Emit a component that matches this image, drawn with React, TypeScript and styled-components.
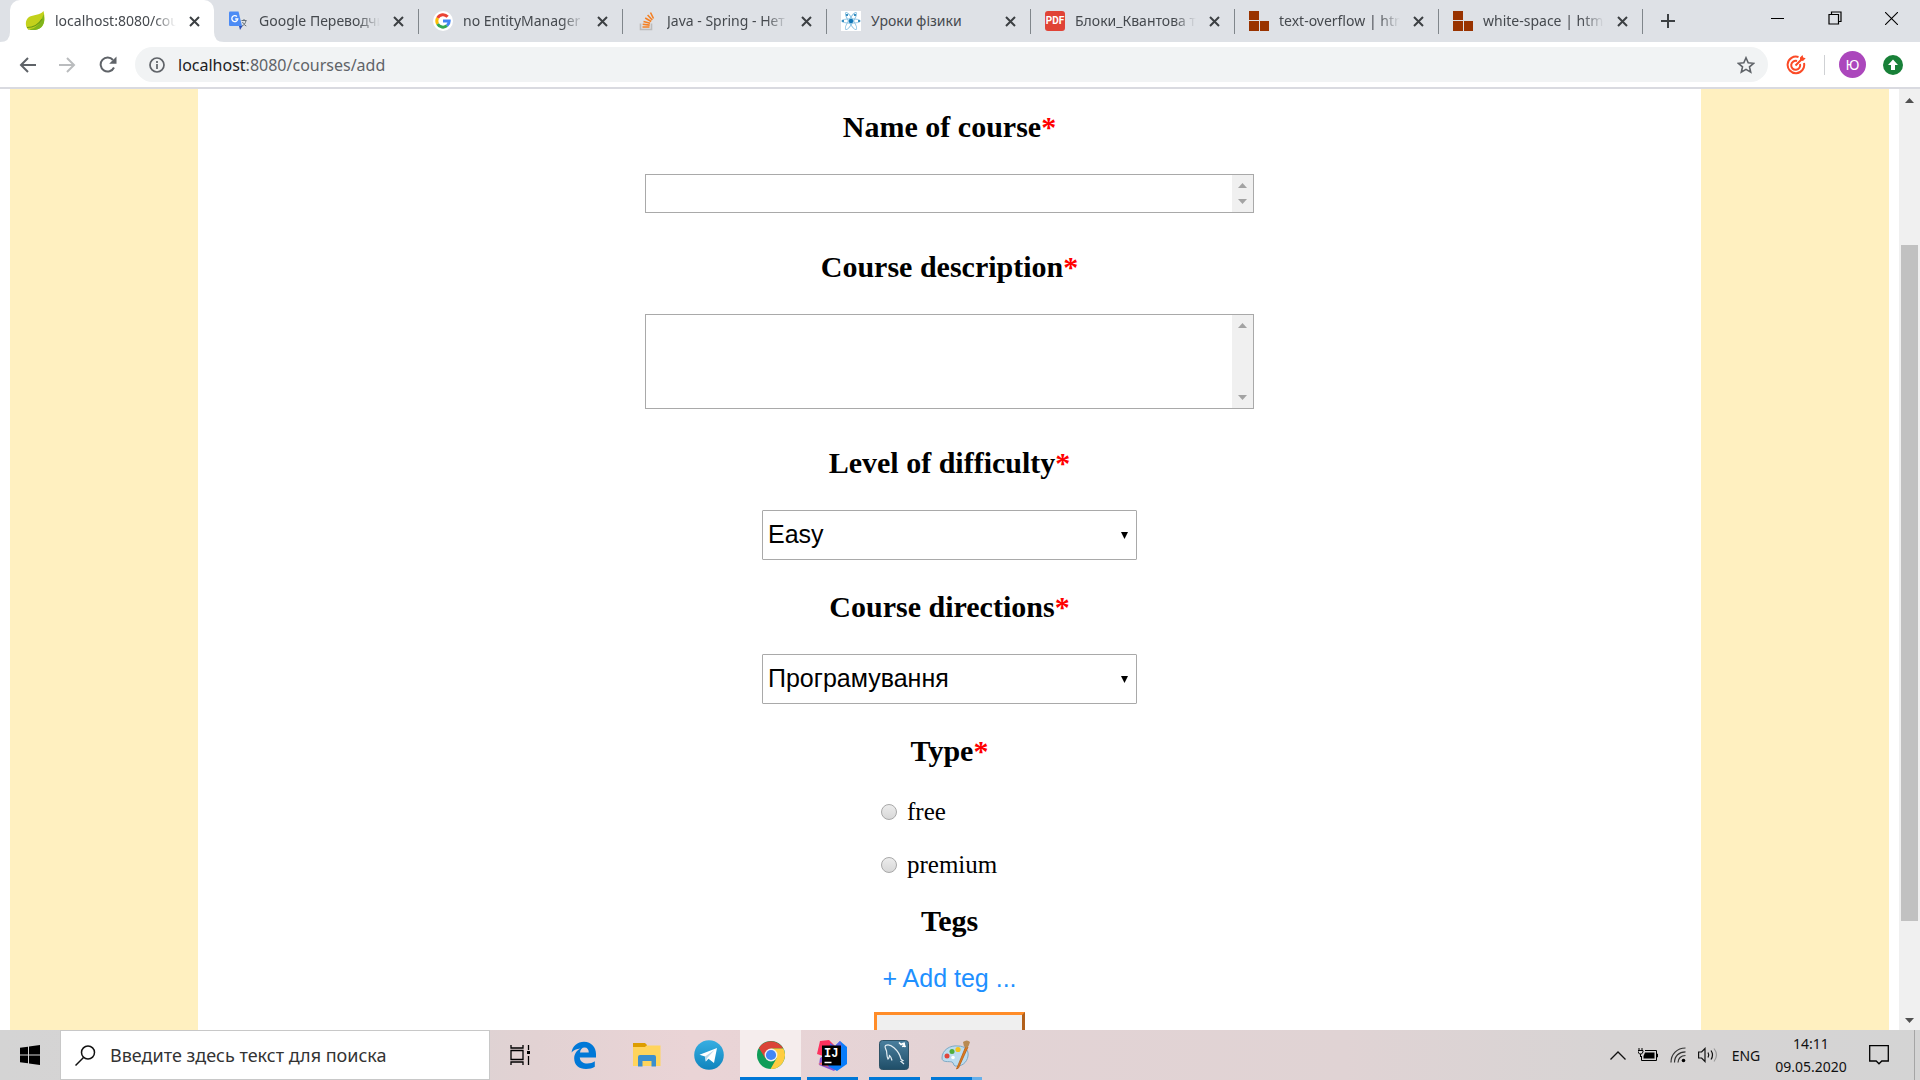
import React from "react";
import styled, { createGlobalStyle } from "styled-components";

const ui = `"Noto Sans", "Open Sans", sans-serif`;
const serif = `"Liberation Serif", "Times New Roman", serif`;
const sans = `"Liberation Sans", Arial, sans-serif`;

const Global = createGlobalStyle`
  * { box-sizing: border-box; }
  html, body { margin: 0; padding: 0; background: #fff; overflow: hidden; }
  button, input, select, textarea { font: inherit; color: inherit; margin: 0; }
  button { border: 0; background: none; padding: 0; }
  svg { display: block; flex: none; }
`;

const Desktop = styled.div`
  display: flex;
  flex-direction: column;
  height: 100vh;
  font-family: ${ui};
`;

/* ---------- browser chrome ---------- */

const TabStrip = styled.header`
  display: flex;
  flex: none;
  height: 42px;
  padding-left: 10px;
  background: #dee1e6;
`;

const Tab = styled.div<{ $active?: boolean; $line?: boolean }>`
  position: relative;
  display: flex;
  align-items: center;
  flex: 0 1 204px;
  min-width: 0;
  padding: 0 12px 0 15px;
  gap: 10px;
  background: ${(p) => (p.$active ? "#fff" : "transparent")};
  border-radius: 10px 10px 0 0;
  &::after {
    content: "";
    position: absolute;
    right: -1px;
    top: 9px;
    width: 1px;
    height: 25px;
    background: ${(p) => (p.$line ? "#80868b" : "transparent")};
  }
`;

const TabFoot = styled.svg<{ $side: "left" | "right" }>`
  position: absolute;
  bottom: 0;
  ${(p) => p.$side}: -10px;
`;

const TabTitle = styled.a<{ $fade?: boolean }>`
  flex: 1;
  min-width: 0;
  white-space: nowrap;
  font-size: 14px;
  line-height: 22px;
  color: #45494e;
  text-decoration: none;
  mask-image: ${(p) =>
    p.$fade ? "linear-gradient(to right, #000 calc(100% - 22px), transparent)" : "none"};
`;

const IconButton = styled.button<{ $w?: number }>`
  display: flex;
  align-items: center;
  justify-content: center;
  flex: none;
  width: ${(p) => p.$w ?? 20}px;
  height: 36px;
`;

const WindowControls = styled.div`
  display: flex;
  margin-left: auto;
`;

const NewTab = styled(IconButton)`
  align-self: center;
  margin-left: 8px;
`;

const Toolbar = styled.nav`
  display: flex;
  align-items: center;
  flex: none;
  height: 47px;
  padding: 0 17px 0 7px;
  background: #fff;
  border-bottom: 2px solid #d9dae0;
`;

const AddressBar = styled.div`
  display: flex;
  align-items: center;
  flex: 1;
  height: 35px;
  margin-left: 7px;
  padding: 0 12px 0 14px;
  gap: 13px;
  border-radius: 18px;
  background: #f1f3f4;
`;

const Url = styled.div`
  flex: 1;
  font-size: 16px;
  line-height: 24px;
  color: #5f6368;
  b { font-weight: 400; color: #202124; }
`;

const ToolbarRule = styled.span`
  width: 1px;
  height: 20px;
  margin-right: 14px;
  background: #cfd1d4;
`;

const Avatar = styled.button`
  width: 27px;
  height: 27px;
  margin-right: 17px;
  border-radius: 50%;
  background: #ab47bc;
  color: #fff;
  font-size: 14px;
  line-height: 27px;
`;

/* ---------- page ---------- */

const Viewport = styled.div`
  display: flex;
  flex: 1;
  min-height: 0;
`;

const Page = styled.div`
  display: flex;
  flex: 1;
  padding: 0 10px;
  overflow: hidden;
`;

const Side = styled.aside`
  flex: 0 0 10%;
  background: #fff0c0;
`;

const Form = styled.form`
  display: flex;
  flex-direction: column;
  align-items: center;
  flex: 1;
  padding-top: 21px;
  height: max-content;
`;

const Field = styled.section<{ $gap?: number; $after: number }>`
  display: flex;
  flex-direction: column;
  align-items: center;
  width: 100%;
  gap: ${(p) => p.$gap ?? 30}px;
  padding-bottom: ${(p) => p.$after}px;
`;

const Title = styled.h2`
  margin: 0;
  font: bold 30px/34px ${serif};
  color: #000;
  span { color: #f00; }
`;

const AreaBox = styled.div<{ $h: number }>`
  display: flex;
  width: 609px;
  max-width: 100%;
  height: ${(p) => p.$h}px;
  border: 1px solid #a9a9a9;
`;

const Area = styled.textarea`
  flex: 1;
  padding: 2px;
  border: 0;
  outline: 0;
  resize: none;
  overflow: hidden;
  background: #fff;
  font: 25px/28px ${sans};
`;

const Gutter = styled.div`
  display: flex;
  flex-direction: column;
  align-items: center;
  justify-content: space-between;
  width: 21px;
  padding: 8px 0;
  background: #f0f0f0;
`;

const SelectWrap = styled.div`
  position: relative;
  width: 375px;
  svg { position: absolute; right: 9px; top: 22px; pointer-events: none; }
`;

const Select = styled.select`
  appearance: none;
  width: 100%;
  height: 50px;
  padding: 0 24px 2px 5px;
  border: 1px solid #a9a9a9;
  border-radius: 1px;
  background: #fff;
  color: #000;
  font: 25px/30px ${sans};
`;

const Options = styled.div`
  display: flex;
  flex-direction: column;
  align-items: flex-start;
  width: 137px;
  gap: 25px;
`;

const Option = styled.label`
  display: flex;
  align-items: center;
  gap: 10px;
  font: 25px/28px ${serif};
  color: #000;
`;

const Radio = styled.input`
  appearance: none;
  width: 16px;
  height: 16px;
  border: 1px solid #a8a8a8;
  border-radius: 50%;
  background: linear-gradient(#ececec, #d8d8d8);
`;

const AddTag = styled.button`
  margin-top: 6px;
  font: 25px/28px ${sans};
  color: #1e90ff;
`;

const Submit = styled.button`
  width: 151px;
  height: 50px;
  border: 3px solid;
  border-color: #ff8c28 #b2601b #b2601b #ff8c28;
  background: #efefef;
`;

const ScrollTrack = styled.div`
  display: flex;
  flex-direction: column;
  align-items: center;
  width: 21px;
  padding: 9px 0 7px;
  background: #f0f0f0;
`;

const Thumb = styled.div`
  flex: 676;
  width: 17px;
  background: #c1c1c1;
`;

const TrackGap = styled.div<{ $part: number }>`
  flex: ${(p) => p.$part};
`;

/* ---------- taskbar ---------- */

const Taskbar = styled.footer`
  display: flex;
  flex: none;
  height: 50px;
  background: linear-gradient(to right, #d4d4d4 0%, #d9d3d3 20%, #e2d2d3 28%, #ead4d6 36%, #e3d3d5 50%, #e0d3d4 70%, #d7d4d4 84%, #d4d4d4 100%);
`;

const TaskButton = styled.button<{ $w: number; $active?: boolean }>`
  display: flex;
  align-items: center;
  justify-content: center;
  flex: none;
  width: ${(p) => p.$w}px;
  height: 50px;
  border-bottom: 3px solid ${(p) => (p.$active ? "#0078d7" : "transparent")};
  padding-top: 3px;
  background: ${(p) => (p.$active ? "#f5eded" : "transparent")};
`;

const RunningButton = styled(TaskButton)<{ $stacked?: boolean }>`
  border-bottom: 0;
  padding: 0;
  background: ${(p) =>
    p.$stacked
      ? "linear-gradient(to right, #0078d7 41px, #66b0ea 41px) bottom / 51px 3px no-repeat"
      : "linear-gradient(#0078d7, #0078d7) bottom / 51px 3px no-repeat"};
`;

const Search = styled.label`
  display: flex;
  align-items: center;
  flex: 0 1 430px;
  gap: 14px;
  padding-left: 14px;
  border: 1px solid #c8c8c8;
  background: #fff;
`;

const SearchInput = styled.input`
  flex: 1;
  min-width: 0;
  padding: 0;
  border: 0;
  outline: 0;
  background: none;
  font-size: 18px;
  &::placeholder { color: #333; opacity: 1; }
`;

const Tray = styled.div`
  display: flex;
  align-items: center;
  margin-left: auto;
  color: #111;
`;

const Lang = styled.button`
  width: 46px;
  font-size: 14px;
`;

const Clock = styled.time`
  display: flex;
  flex-direction: column;
  align-items: center;
  width: 84px;
  font-size: 14px;
  line-height: 23px;
`;

const ShowDesktop = styled.button`
  width: 6px;
  height: 50px;
  margin-left: 9px;
  border-left: 1px solid #a5a5a5;
`;

/* ---------- drawings ---------- */

const Cross = () => (
  <svg width="11" height="11" viewBox="0 0 11 11" stroke="#3c4043" strokeWidth="2"><path d="M1 1l9 9M10 1l-9 9" /></svg>
);

const Arrow = ({ up, fill = "#a3a3a3" }: { up?: boolean; fill?: string }) => (
  <svg width="9" height="5" viewBox="0 0 9 5" fill={fill}><path d={up ? "M0 5L4.500 0L9 5z" : "M0 0L4.500 5L9 0z"} /></svg>
);

const Leaf = () => (
  <svg width="20" height="20" viewBox="0 0 20 20">
    <path d="M18.500 0C20 6 20 12 16.500 16C12 20 5 19 3 18.500C0 15 0 9 4 6C8 3.500 15 4.500 18.500 0z" fill="#c3d11b" />
    <path d="M18.500 3C20 9 19.500 13 16 16.500C12 20 6 19 3 18.500C11 18 16 12 18.500 3z" fill="#80b51c" />
    <path d="M2 16.500C9 16.500 14 13 17 8" stroke="#6b9c14" strokeWidth="1.200" fill="none" />
  </svg>
);

const Translate = () => (
  <svg width="20" height="20" viewBox="0 0 20 20">
    <path d="M9 5h9.500v12.500H12z" fill="#dfe2e6" />
    <path d="M12.500 9.500h5M15 8v1.500M17 9.500c-.5 3-2 4.500-4 5.500M13.500 11c.8 1.800 2 3 3.800 4" stroke="#66707a" fill="none" />
    <path d="M0 1.500Q0 .5 1 .5h8.500l3.500 14.500H1q-1 0-1-1z" fill="#4c8bf5" />
    <path d="M10 15h3.500L11 19z" fill="#2f50b8" />
    <path d="M8 5.500a3 3 0 1 0 .8 2.500H6.200" stroke="#fff" strokeWidth="1.300" fill="none" />
  </svg>
);

const Google = () => (
  <svg width="20" height="20" viewBox="0 0 20 20" fill="none" strokeWidth="3">
    <circle cx="10" cy="10" r="10" fill="#fff" />
    <path d="M14.600 5.800A6.200 6.200 0 0 0 4.600 7" stroke="#ea4335" />
    <path d="M4.600 7a6.200 6.200 0 0 0 0 6" stroke="#fbbc05" />
    <path d="M4.600 13a6.200 6.200 0 0 0 9.400 1.700" stroke="#34a853" />
    <path d="M14 14.700A6 6 0 0 0 16.200 10H10" stroke="#4285f4" />
  </svg>
);

const Stack = () => (
  <svg width="20" height="20" viewBox="0 0 20 20" fill="none" strokeWidth="1.600">
    <path d="M3.500 12.500v6h11v-6" stroke="#bcbbbb" />
    <path d="M5.500 16h7M5.700 13.300l7 .8M6.500 10.400l6.600 1.900M8.200 7l6 3.500M10.600 4l4.700 5M13.500 1.500l3 6" stroke="#f48024" />
  </svg>
);

const Atom = () => (
  <svg width="20" height="20" viewBox="0 0 20 20" fill="none" stroke="#8cc3e2" strokeWidth=".9">
    <rect width="20" height="20" fill="#fff" stroke="none" />
    <ellipse cx="10" cy="10" rx="9.500" ry="2.200" />
    <ellipse cx="10" cy="10" rx="9.800" ry="2.200" transform="rotate(58 10 10)" />
    <ellipse cx="10" cy="10" rx="9.800" ry="2.200" transform="rotate(122 10 10)" />
    <circle cx="10" cy="10" r="2.200" fill="#1277b8" stroke="none" />
    <path d="M1 9h2v2H1zM17 9h2v2h-2zM5 3h2v2H5zM13 3h2v2h-2z" fill="#3a8fc0" stroke="none" />
  </svg>
);

const PdfMark = styled.span`
  flex: none;
  width: 20px;
  height: 20px;
  border-radius: 3px;
  background: #e04336;
  color: #fff;
  font: bold 10px/20px "Roboto", sans-serif;
  text-align: center;
`;

const Blocks = () => (
  <svg width="20" height="20" viewBox="0 0 20 20" fill="#993300"><path d="M0 0h10v9H0zM0 10h10v10H0zM11 10h9v10h-9z" /></svg>
);

const Edge = () => (
  <svg width="26" height="28" viewBox="0 0 26 28">
    <path d="M.5 11.500C1.500 5 6.500.8 13 .8C20.500.8 25 6.500 25 13v3.500H8.800c.2 4 3.700 6 7.500 6c3 0 5.300-.8 7.500-2.200v5.500C21.500 27.200 18.500 28 15 28C8 28 3.200 24 3.200 17.500c0-4.500 2.400-8 6.300-10C5.500 7.700 2.300 9.300.5 11.500zM9 11.500h8.800c0-3-1.500-5-4.200-5S9.300 8.500 9 11.500z" fill="#0078d7" fillRule="evenodd" />
  </svg>
);

const Folder = () => (
  <svg width="28" height="24" viewBox="0 0 28 24">
    <path d="M0 0h12l2 2v4H0z" fill="#dd9d00" />
    <path d="M0 4h12l1.500-1.500H27.500V23H0z" fill="#ffd45c" />
    <path d="M5 23.500V14q0-2 2-2h14q2 0 2 2v9.500h-4.500V18h-9v5.500z" fill="#3b8fce" />
  </svg>
);

const Telegram = () => (
  <svg width="30" height="30" viewBox="0 0 30 30">
    <defs><linearGradient id="tg" x2="0" y2="1"><stop stopColor="#37aee2" /><stop offset="1" stopColor="#0f84bd" /></linearGradient></defs>
    <circle cx="15" cy="15" r="14.800" fill="url(#tg)" />
    <path d="M5.500 14.800L23 8l-3 15-5.500-4.200-2.700 2.700-.8-5z" fill="#fff" />
    <path d="M11 16.500L20.500 10l-7.300 8-1.400 3.500z" fill="#b9d7e8" />
  </svg>
);

const Chrome = () => (
  <svg width="28" height="28" viewBox="0 0 28 28">
    <circle cx="14" cy="14" r="14" fill="#0f9d58" />
    <path d="M14 14L1.900 7A14 14 0 0 1 26.100 7.500H14z" fill="#db4437" />
    <path d="M14 7.500h12.400A14 14 0 0 1 13.500 28l6-10.500z" fill="#ffcd40" />
    <path d="M1.900 7l6.500 10.500L12 8z" fill="#db4437" />
    <circle cx="14" cy="14" r="6.400" fill="#f1f1f1" />
    <circle cx="14" cy="14" r="5.100" fill="#4285f4" />
  </svg>
);

const Idea = () => (
  <svg width="30" height="31" viewBox="0 0 30 31">
    <path d="M3 1l9-1 6 6-6 12L0 14z" fill="#fe315d" />
    <path d="M3 18l9-6 10 14-5 5-15-6z" fill="#8a55d8" />
    <path d="M1 24l7-3 4 6z" fill="#f06a6a" />
    <path d="M19 5l4-4 7 6v17l-10 7-9-5z" fill="#087cfa" />
    <path d="M13 3l5 3 5-5 2 6H13z" fill="#5b62e8" />
    <rect x="5" y="5.500" width="19" height="20" fill="#000" />
    <text x="7" y="16.500" fill="#fff" fontFamily="Liberation Mono, monospace" fontWeight="bold" fontSize="12">IJ</text>
    <path d="M7.500 22.500h7" stroke="#fff" strokeWidth="1.500" />
  </svg>
);

const Workbench = () => (
  <svg width="30" height="30" viewBox="0 0 30 30" fill="none">
    <defs><linearGradient id="wb" x2="0" y2="1"><stop stopColor="#4a7f9e" /><stop offset="1" stopColor="#1f4e68" /></linearGradient></defs>
    <rect x=".5" y=".5" width="29" height="29" rx="3" fill="url(#wb)" stroke="#2d5266" />
    <path d="M25 24l-3-2.500 2-.8-2-1.500c-1-5-3-8-7-11.500C12 5 9 4 6.500 5.500C5 7 7 9 7.500 11c.6 3 0 5 1.500 8c1-1 1.500-2 1.500-3.500c1.500 1 2 3 2.500 5" stroke="#e3edf2" strokeWidth="1.200" />
    <path d="M20 2.500l2 2 2-1 2.500 3.500M25 2.500l.5 3-2.500 1" stroke="#fff" strokeWidth="1.600" />
  </svg>
);

const Paint = () => (
  <svg width="30" height="30" viewBox="0 0 30 30">
    <path d="M1 18C1 10 9 5 17 6c7 0 11 4 10 10c-1 7-7 11-13 10c-2-1-1-3-3-4C8 21 1 23 1 18z" fill="#bcdcef" stroke="#7da9c4" />
    <circle cx="6" cy="16" r="2.500" fill="#e0463c" /><circle cx="11" cy="11.500" r="2.500" fill="#4fae3e" />
    <circle cx="17" cy="9.500" r="2.600" fill="#f2c21f" /><circle cx="12" cy="17.500" r="1.800" fill="#fff" />
    <path d="M25 6L15.500 29l2-1L27 7z" fill="#e07b1e" stroke="#b65d10" strokeWidth=".8" />
    <path d="M22 2q4-3 7 0q-1 4-3 6l-3-1.500z" fill="#b98a52" />
  </svg>
);

const tabs = [
  { title: "localhost:8080/cou", icon: <Leaf />, fade: true },
  { title: "Google Переводчи", icon: <Translate />, fade: true },
  { title: "no EntityManager", icon: <Google />, fade: true },
  { title: "Java - Spring - Нет", icon: <Stack />, fade: true },
  { title: "Уроки фізики", icon: <Atom />, fade: false },
  { title: "Блоки_Квантова т", icon: <PdfMark>PDF</PdfMark>, fade: true },
  { title: "text-overflow | htm", icon: <Blocks />, fade: true },
  { title: "white-space | html", icon: <Blocks />, fade: true },
];

const Star = () => <span>*</span>;

function BrowserHeader() {
  return (
    <>
      <TabStrip>
        {tabs.map((t, i) => (
          <Tab key={t.title} $active={i === 0} $line={i > 0}>
            {i === 0 && (
              <>
                <TabFoot $side="left" width="10" height="10" fill="#fff"><path d="M10 0v10H0Q10 10 10 0z" /></TabFoot>
                <TabFoot $side="right" width="10" height="10" fill="#fff"><path d="M0 0v10h10Q0 10 0 0z" /></TabFoot>
              </>
            )}
            {t.icon}
            <TabTitle href="#" $fade={t.fade}>{t.title}</TabTitle>
            <IconButton aria-label="Close tab" $w={16}><Cross /></IconButton>
          </Tab>
        ))}
        <NewTab aria-label="New tab" $w={36}>
          <svg width="14" height="14" stroke="#3c4043" strokeWidth="2"><path d="M7 0v14M0 7h14" /></svg>
        </NewTab>
        <WindowControls>
          <IconButton aria-label="Minimize" $w={57}><svg width="13" height="13" stroke="#000"><path d="M0 6.500h13" /></svg></IconButton>
          <IconButton aria-label="Restore" $w={57}>
            <svg width="14" height="14" fill="none" stroke="#000" strokeWidth="1.200"><path d="M1 3.500h9.500V13H1zM3.500 3.500V1H13v9.500h-2.500" /></svg>
          </IconButton>
          <IconButton aria-label="Close" $w={57}><svg width="13" height="13" stroke="#000" strokeWidth="1.100"><path d="M0 0l13 13M13 0L0 13" /></svg></IconButton>
        </WindowControls>
      </TabStrip>
      <Toolbar>
        <IconButton aria-label="Back" $w={40}>
          <svg width="17" height="16" fill="none" stroke="#5f6368" strokeWidth="2"><path d="M17 8H2M9 1L2 8l7 7" /></svg>
        </IconButton>
        <IconButton aria-label="Forward" $w={41}>
          <svg width="17" height="16" fill="none" stroke="#babcbe" strokeWidth="2"><path d="M0 8h15M8 1l7 7-7 7" /></svg>
        </IconButton>
        <IconButton aria-label="Reload" $w={40}>
          <svg width="18" height="17" viewBox="0 0 18 17" fill="none" stroke="#5f6368" strokeWidth="2"><path d="M15 11.500A7 7 0 1 1 14 4" /><path d="M17.500.5v7.300h-7.300z" fill="#5f6368" stroke="none" /></svg>
        </IconButton>
        <AddressBar>
          <svg width="16" height="16" fill="none" stroke="#5f6368" strokeWidth="1.700"><circle cx="8" cy="8" r="7" /><path d="M8 7v5M8 4v2" /></svg>
          <Url><b>localhost</b>:8080/courses/add</Url>
          <IconButton aria-label="Bookmark" $w={20}>
            <svg width="18" height="18" viewBox="0 0 18 18" fill="none" stroke="#5f6368" strokeWidth="1.600"><path d="M9 1.800l2.200 5 5.400.5-4.100 3.600 1.200 5.300L9 13.400l-4.700 2.800 1.200-5.300L1.400 7.300l5.400-.5z" /></svg>
          </IconButton>
        </AddressBar>
        <IconButton aria-label="Extension" $w={56}>
          <svg width="20" height="20" viewBox="0 0 20 20" fill="none" stroke="#fb4a26" strokeWidth="2"><path d="M12.500 2A8.300 8.300 0 1 0 18 8" /><path d="M11 6a4.500 4.500 0 1 0 3 3M9.500 10.500L16 4" /><path d="M14 5V2.500L16.500 0l.7 2.500 2.500.8L17 6z" fill="#fb4a26" stroke="none" /></svg>
        </IconButton>
        <ToolbarRule />
        <Avatar aria-label="Profile">Ю</Avatar>
        <IconButton aria-label="Update" $w={20}>
          <svg width="20" height="20"><circle cx="10" cy="10" r="10" fill="#188038" /><path d="M10 4.500l5 5.500h-3v5H8v-5H5z" fill="#fff" /></svg>
        </IconButton>
      </Toolbar>
    </>
  );
}

function CourseForm() {
  return (
    <Form onSubmit={(e) => e.preventDefault()}>
      <Field $after={37}>
        <Title><label htmlFor="name">Name of course<Star /></label></Title>
        <AreaBox $h={39}>
          <Area id="name" />
          <Gutter><Arrow up /><Arrow /></Gutter>
        </AreaBox>
      </Field>
      <Field $after={37}>
        <Title><label htmlFor="description">Course description<Star /></label></Title>
        <AreaBox $h={95}>
          <Area id="description" />
          <Gutter><Arrow up /><Arrow /></Gutter>
        </AreaBox>
      </Field>
      <Field $after={30}>
        <Title><label htmlFor="level">Level of difficulty<Star /></label></Title>
        <SelectWrap>
          <Select id="level"><option>Easy</option></Select>
          <svg width="7" height="7" viewBox="0 0 7 7"><path d="M0 0h7L3.500 7z" /></svg>
        </SelectWrap>
      </Field>
      <Field $after={30}>
        <Title><label htmlFor="direction">Course directions<Star /></label></Title>
        <SelectWrap>
          <Select id="direction"><option>Програмування</option></Select>
          <svg width="7" height="7" viewBox="0 0 7 7"><path d="M0 0h7L3.500 7z" /></svg>
        </SelectWrap>
      </Field>
      <Field $after={25}>
        <Title>Type<Star /></Title>
        <Options>
          <Option><Radio type="radio" name="type" />free</Option>
          <Option><Radio type="radio" name="type" />premium</Option>
        </Options>
      </Field>
      <Field $gap={20} $after={0}>
        <Title>Tegs</Title>
        <AddTag type="button">+ Add teg ...</AddTag>
        <Submit aria-label="Create course" />
      </Field>
    </Form>
  );
}

function SystemBar() {
  return (
    <Taskbar>
      <TaskButton aria-label="Start" $w={60}>
        <svg width="20" height="20" viewBox="0 0 20 20"><path d="M0 2.800L8 1.700v7.800H0zM9 1.500L20 0v9.500H9zM0 10.500h8v7.800L0 17.200zM9 10.500h11V20L9 18.500z" /></svg>
      </TaskButton>
      <Search>
        <svg width="21" height="21" viewBox="0 0 21 21" fill="none" stroke="#111" strokeWidth="1.500"><circle cx="13" cy="7.500" r="6.500" /><path d="M8.500 12.500L.5 20.500" /></svg>
        <SearchInput aria-label="Search" placeholder="Введите здесь текст для поиска" />
      </Search>
      <TaskButton aria-label="Task view" $w={61}>
        <svg width="21" height="20" viewBox="0 0 21 20" fill="none" stroke="#000" strokeWidth="1.300"><path d="M1 5.500h12v9H1zM1 0v3h12V0M1 20v-3h12v3M18.500 0v5M18.500 11v9" /><path d="M17 6h3v3h-3z" fill="#000" stroke="none" /></svg>
      </TaskButton>
      <TaskButton aria-label="Edge" $w={66}><Edge /></TaskButton>
      <TaskButton aria-label="Explorer" $w={60}><Folder /></TaskButton>
      <TaskButton aria-label="Telegram" $w={63}><Telegram /></TaskButton>
      <TaskButton aria-label="Chrome" $w={61} $active><Chrome /></TaskButton>
      <RunningButton aria-label="IntelliJ IDEA" $w={62}><Idea /></RunningButton>
      <RunningButton aria-label="MySQL Workbench" $w={62}><Workbench /></RunningButton>
      <RunningButton aria-label="Paint" $w={62} $stacked><Paint /></RunningButton>
      <Tray>
        <IconButton aria-label="Hidden icons" $w={30}><svg width="16" height="9" fill="none" stroke="#111" strokeWidth="1.300"><path d="M.5 8.500L8 1l7.500 7.500" /></svg></IconButton>
        <IconButton aria-label="Battery" $w={30}>
          <svg width="20" height="14" viewBox="0 0 20 14" fill="none" stroke="#000"><path d="M7 2.500h11.500v10H3.500V8M18.500 6h1v3h-1" /><path d="M7 4.500h9.500v6H5.500V8z" fill="#000" stroke="none" /><path d="M1 0v2.500M4 0v2.500M2.500 6v3" /><path d="M0 2.500h5V4L3.500 6h-2L0 4z" /></svg>
        </IconButton>
        <IconButton aria-label="Wi-Fi" $w={30}>
          <svg width="16" height="16" viewBox="0 0 16 16" fill="none" stroke="#333" strokeWidth="1.200"><path d="M1 15.500C1 7 7 1 15.500 1M4.500 15.500C4.500 9 9 4.800 15.500 4.800M8 15.500c0-4 3-7 7.500-7" /><circle cx="13.500" cy="13.500" r="1.800" fill="#000" stroke="none" /></svg>
        </IconButton>
        <IconButton aria-label="Volume" $w={30}>
          <svg width="20" height="18" viewBox="0 0 20 18" fill="none" stroke="#111" strokeWidth="1.200"><path d="M.6 6h3L7 2.500v13L3.600 12h-3zM10 6.500q1.500 2.500 0 5M13 4.500q3 4.500 0 9" /><path d="M16 2.500q5 6.500 0 13" stroke="#999" /></svg>
        </IconButton>
        <Lang>ENG</Lang>
        <Clock><span>14:11</span><span>09.05.2020</span></Clock>
        <IconButton aria-label="Notifications" $w={52}>
          <svg width="20" height="20" viewBox="0 0 20 20" fill="none" stroke="#000" strokeWidth="1.300"><path d="M.7.7h18.600V16h-6.500L10 18.800 7.200 16H.7z" /></svg>
        </IconButton>
        <ShowDesktop aria-label="Show desktop" />
      </Tray>
    </Taskbar>
  );
}

export default function App() {
  return (
    <Desktop>
      <Global />
      <BrowserHeader />
      <Viewport>
        <Page>
          <Side />
          <CourseForm />
          <Side />
        </Page>
        <ScrollTrack>
          <Arrow up fill="#505050" />
          <TrackGap $part={142} />
          <Thumb />
          <TrackGap $part={97} />
          <Arrow fill="#505050" />
        </ScrollTrack>
      </Viewport>
      <SystemBar />
    </Desktop>
  );
}
